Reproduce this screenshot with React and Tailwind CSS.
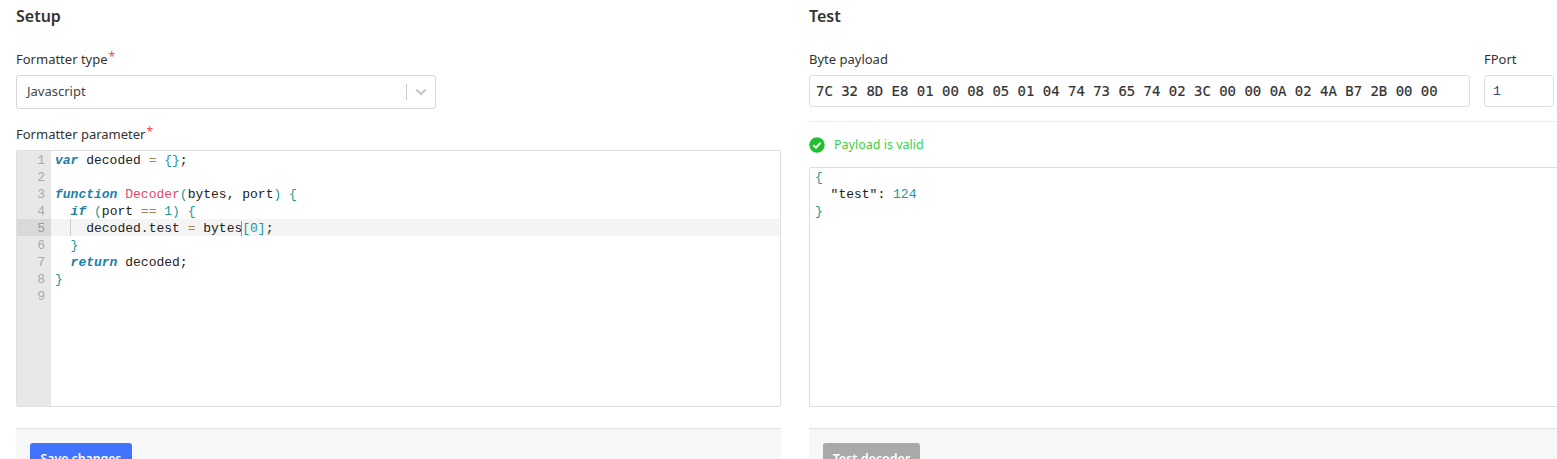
const sans = "font-['Noto_Sans',sans-serif]";
const mono = "font-['Liberation_Mono',monospace]";

const K = ({ children }) => <span className="font-bold italic text-[#1b7fa8]">{children}</span>;
const B = ({ children }) => <span className="text-[#1a9a9a]">{children}</span>;
const O = ({ children }) => <span className="text-[#a67f59]">{children}</span>;
const F = ({ children }) => <span className="text-[#dd4a68]">{children}</span>;

const lines = [
  <><K>var</K> decoded <O>=</O> <B>{"{}"}</B>;</>,
  <></>,
  <><K>function</K> <F>Decoder</F><B>(</B>bytes, port<B>)</B> <B>{"{"}</B></>,
  <>{"  "}<K>if</K> <B>(</B>port <O>==</O> <B>1</B><B>)</B> <B>{"{"}</B></>,
  <>{"    "}decoded.test <O>=</O> bytes<span className="border-l border-[#999] -ml-px"></span><B>[0]</B>;</>,
  <>{"  "}<B>{"}"}</B></>,
  <>{"  "}<K>return</K> decoded;</>,
  <><B>{"}"}</B></>,
  <></>,
];

function Label({ children, required }) {
  return (
    <div className="text-[13px] leading-[18px] text-[#333] h-[18px] flex">
      <span>{children}</span>
      {required && <span className="text-[#f5454f] text-[12px] ml-[1px] -mt-[2px]">*</span>}
    </div>
  );
}

function Footer({ children }) {
  return (
    <div className="mt-[21px] h-[60px] border-t border-[#e2e2e2] bg-[#f7f7f7] pt-[14px] pl-[14px]">{children}</div>
  );
}

export default function App() {
  return (
    <div className={`${sans} h-[459px] w-[1557px] overflow-hidden bg-white`}>
      <div className="grid grid-cols-[765px_765px] gap-x-[28px] pl-[16px] pt-[5px]">
        <section>
          <h2 className="text-[16px] leading-[22px] font-semibold text-[#333]">Setup</h2>
          <div className="mt-[23px]"><Label required>Formatter type</Label></div>
          <div className="mt-[7px] flex h-[34px] w-[420px] items-center rounded-[3px] border border-[#d6d6d6] pl-[10px] pr-[7px] text-[13px] text-[#444]">
            <span className="flex-1">Javascript</span>
            <span className="h-[16px] w-px bg-[#ccc]"></span>
            <svg className="ml-[7px]" width="14" height="14" viewBox="0 0 20 20" fill="#ccc">
              <path d="M4.5 7.2 1.9 9.6l8.1 7.6 8.1-7.6-2.6-2.4L10 12.4z" transform="translate(0 -2)" />
            </svg>
          </div>
          <div className="mt-[16px]"><Label required>Formatter parameter</Label></div>
          <div className="mt-[7px] flex h-[257px] overflow-hidden rounded-[2px] border border-[#dedede]">
            <div className={`${mono} w-[34px] shrink-0 bg-[#e8e8e8] text-[13px] leading-[17px] text-[#aaa]`}>
              {lines.map((_, i) => (
                <div key={i} className={`h-[17px] pt-[1px] pr-[6px] text-right ${i === 4 ? "bg-[#d9d9d9] text-[#999]" : ""}`}>{i + 1}</div>
              ))}
            </div>
            <div className={`${mono} flex-1 text-[13px] leading-[17px] text-[#222]`}>
              {lines.map((l, i) => (
                <div key={i} className={`relative h-[17px] pt-[1px] whitespace-pre pl-[4px] ${i === 4 ? "bg-[#f4f4f4]" : ""}`}>
                  {i === 4 && <span className="absolute left-[19px] top-0 h-[17px] w-px bg-[#ccc]"></span>}
                  {l}
                </div>
              ))}
            </div>
          </div>
          <Footer>
            <button className="h-[32px] w-[102px] rounded-[3px] bg-[#4074ff] text-[12.25px] font-semibold text-white">Save changes</button>
          </Footer>
        </section>

        <section>
          <h2 className="text-[16px] leading-[22px] font-semibold text-[#333]">Test</h2>
          <div className="mt-[23px] flex gap-[14px]">
            <div className="w-[661px]">
              <Label>Byte payload</Label>
              <div className="mt-[7px] flex h-[32px] items-center rounded-[3px] border border-[#dedede] pl-[6px] font-['DejaVu_Sans_Mono',monospace] text-[13.96px] text-[#333] [-webkit-text-stroke:0.2px_#333]">
                7C 32 8D E8 01 00 08 05 01 04 74 73 65 74 02 3C 00 00 0A 02 4A B7 2B 00 00
              </div>
            </div>
            <div className="w-[70px]">
              <Label>FPort</Label>
              <div className={`${mono} mt-[7px] flex h-[32px] items-center rounded-[3px] border border-[#dedede] pl-[8px] pt-[1px] text-[13px] text-[#2d4a7a]`}>1</div>
            </div>
          </div>
          <div className="mt-[14px] border-t border-[#eeeeee]"></div>
          <div className="mt-[13px] flex h-[20px] items-center text-[12.5px] text-[#3ecf4a]">
            <svg width="16" height="16" viewBox="0 0 16 16">
              <circle cx="8" cy="8" r="7.7" fill="#22c02e" />
              <path d="M4.4 8.2 7 10.7l4.6-4.9" fill="none" stroke="#fff" strokeWidth="2" />
            </svg>
            <span className="ml-[9px]">Payload is valid</span>
          </div>
          <div className={`${mono} mt-[12px] h-[240px] rounded-l-[2px] border border-[#dedede] pl-[5px] pt-[1px] text-[13px] leading-[17px] text-[#222]`}>
            <div className="h-[17px] whitespace-pre"><B>{"{"}</B></div>
            <div className="h-[17px] whitespace-pre">{"  "}<span className="text-[#222]">"test"</span>: <B>124</B></div>
            <div className="h-[17px] whitespace-pre"><B>{"}"}</B></div>
          </div>
          <Footer>
            <button className="h-[32px] w-[97px] rounded-[3px] bg-[#a9a9a9] text-[12.5px] font-semibold text-white">Test decoder</button>
          </Footer>
        </section>
      </div>
    </div>
  );
}
